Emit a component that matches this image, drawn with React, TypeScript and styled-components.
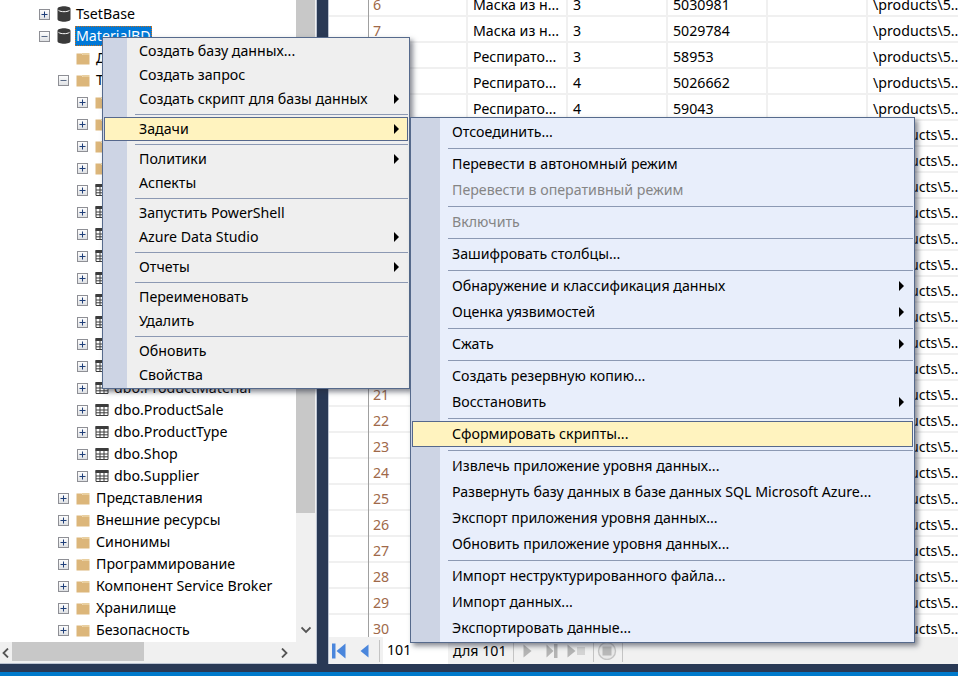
import React from "react";
import styled, { createGlobalStyle } from "styled-components";

const Global = createGlobalStyle`
  html, body { margin: 0; padding: 0; background: #fff; overflow: hidden; }
  * { box-sizing: border-box; }
`;

const Win = styled.div`
  position: relative;
  width: 958px;
  height: 676px;
  overflow: hidden;
  display: flex;
  flex-direction: column;
  background: #293955;
  font-family: "Noto Sans", "Open Sans", sans-serif;
  font-size: 14.2px;
  color: #000;
`;
const Workspace = styled.div`
  display: flex;
  height: 664px;
  flex: none;
`;
const TreePanel = styled.div`
  width: 317px;
  flex: none;
  display: flex;
  flex-direction: column;
  background: #fff;
  border-right: 1px solid #bcc4d2;
  border-bottom: 1px solid #bcc4d2;
`;
const TreeBody = styled.div`
  flex: 1;
  display: flex;
  min-height: 0;
`;
const TreeList = styled.div`
  flex: 1;
  padding-top: 3px;
  overflow: hidden;
`;
const Row = styled.div<{ $level: number }>`
  height: 22px;
  display: flex;
  align-items: center;
  padding-left: ${(p) => 39 + (p.$level - 1) * 19}px;
  white-space: nowrap;
`;
const Expander = styled.span<{ $hidden?: boolean }>`
  width: 11px;
  height: 11px;
  flex: none;
  margin-right: 7px;
  position: relative;
  visibility: ${(p) => (p.$hidden ? "hidden" : "visible")};
  border: 1px solid #8e8f95;
  background: linear-gradient(#fdfdfd, #dfe1e4);
`;
const ExpPlus = styled.svg`
  position: absolute;
  left: 0;
  top: 0;
  width: 9px;
  height: 9px;
  display: block;
`;
const NodeIcon = styled.svg<{ $gap: number }>`
  width: 14px;
  height: 16px;
  flex: none;
  margin-right: ${(p) => p.$gap}px;
  display: block;
`;
const Label = styled.span<{ $selected?: boolean }>`
  line-height: 20px;
  padding: 0 1px;
  margin-left: -1px;
  ${(p) =>
    p.$selected
      ? "background:#0078d7;color:#fff;outline:1px dotted #c8701c;outline-offset:-1px;"
      : ""}
`;
const VScroll = styled.div`
  width: 20px;
  flex: none;
  background: #f0f0f0;
  display: flex;
  flex-direction: column;
  align-items: center;
  padding-bottom: 7px;
`;
const VThumb = styled.div`
  width: 19px;
  margin-right: 1px;
  height: 513px;
  flex: none;
  background: #c8c8c8;
`;
const HScroll = styled.div`
  height: 21px;
  flex: none;
  background: #f0f0f0;
  display: flex;
  align-items: center;
  padding: 0 27px 0 1px;
`;
const HThumb = styled.div`
  width: 132px;
  height: 19px;
  margin-left: 1px;
  background: #c8c8c8;
  align-self: flex-start;
`;
const Chevron = styled.svg<{ $push?: boolean }>`
  width: 10px;
  height: 10px;
  flex: none;
  display: block;
  ${(p) => (p.$push ? "margin-left:auto;" : "")}
`;
const VChevron = styled(Chevron)`
  margin-top: auto;
`;
const Splitter = styled.div`
  width: 11px;
  flex: none;
  background: #293955;
`;
const GridPanel = styled.div`
  flex: 1;
  min-width: 0;
  display: flex;
  flex-direction: column;
  background: #fff;
  border-left: 1px solid #bcc4d2;
`;
const Rows = styled.div`
  flex: 1;
  min-height: 0;
  overflow: hidden;
`;
const RowsInner = styled.div`
  margin-top: -9px;
`;
const GridRow = styled.div`
  height: 26px;
  display: grid;
  grid-template-columns: 40px 99px 100px 100px 100px 100px 1fr;
  border-bottom: 2px solid #f0f0f0;
`;
const RowHeader = styled.div`
  border-right: 1px solid #a0a0a0;
  margin-bottom: -2px;
`;
const Cell = styled.div<{ $number?: boolean }>`
  border-right: 2px solid #f0f0f0;
  margin-bottom: -2px;
  padding: 2px 0 0 ${(p) => (p.$number ? 4 : 5)}px;
  line-height: 24px;
  white-space: nowrap;
  color: ${(p) => (p.$number ? "#a0694a" : "#000")};
`;
const Pager = styled.div`
  height: 27px;
  flex: none;
  background: #f1f1f1;
  display: flex;
  align-items: center;
  padding-left: 3px;
`;
const PagerIcon = styled.svg<{ $w: number; $ml: number }>`
  width: ${(p) => p.$w}px;
  height: 18px;
  margin-left: ${(p) => p.$ml}px;
  flex: none;
  display: block;
`;
const PagerSep = styled.span<{ $ml: number }>`
  width: 1px;
  height: 22px;
  background: #c4c4c4;
  flex: none;
  margin-left: ${(p) => p.$ml}px;
`;
const PagerInput = styled.div`
  width: 65px;
  height: 27px;
  margin-left: 3px;
  background: #fff;
  line-height: 25px;
  padding-left: 4px;
  flex: none;
`;
const PagerText = styled.span`
  margin-left: 5px;
  width: 59px;
  flex: none;
`;
const Footer = styled.div`
  flex: 1;
  display: flex;
  flex-direction: column;
  justify-content: flex-end;
  background: #293955;
`;
const StatusBar = styled.div`
  height: 4px;
  background: #007acc;
`;
const Menu = styled.div<{ $left: number; $top: number; $width: number; $bg: string; $gutter: number }>`
  position: absolute;
  left: ${(p) => p.$left}px;
  top: ${(p) => p.$top}px;
  width: ${(p) => p.$width}px;
  padding: 1px;
  border: 1px solid #566a8c;
  background: linear-gradient(
    to right,
    #cdd4e4 0,
    #cdd4e4 ${(p) => p.$gutter}px,
    ${(p) => p.$bg} ${(p) => p.$gutter}px
  );
  box-shadow: 3px 3px 5px rgba(40, 45, 60, 0.55);
`;
const MenuItem = styled.div<{ $h: number; $pad: number; $active?: boolean; $disabled?: boolean }>`
  height: ${(p) => p.$h}px;
  display: flex;
  align-items: center;
  justify-content: space-between;
  padding-left: ${(p) => p.$pad}px;
  padding-right: 9px;
  white-space: nowrap;
  color: ${(p) => (p.$disabled ? "#858585" : "#000")};
  ${(p) =>
    p.$active
      ? `background:#fff3bf;outline:1px solid #56688c;outline-offset:-1px;`
      : ""}
`;
const MenuLabel = styled.span`
  line-height: 20px;
`;
const MenuSep = styled.div<{ $inset: number }>`
  height: 6px;
  margin-left: ${(p) => p.$inset}px;
  display: flex;
  align-items: center;
  &::before {
    content: "";
    flex: 1;
    height: 1px;
    background: #8c99b3;
  }
`;
const Arrow = styled.span`
  width: 0;
  height: 0;
  border-left: 5px solid #000;
  border-top: 5px solid transparent;
  border-bottom: 5px solid transparent;
`;

type NodeKind = "db" | "folder" | "table";
type NodeDef = { level: number; kind: NodeKind; text: string; open?: boolean; leaf?: boolean; selected?: boolean };

const folders3 = ["Системные таблицы", "FileTables", "Внешние таблицы", "Графовые таблицы"];
const tables = ["dbo.Agent", "dbo.Material", "dbo.MaterialType", "dbo.Product", "dbo.ProductCost", "dbo.ProductImage", "dbo.ProductLog", "dbo.ProductPrice", "dbo.ProductStock", "dbo.ProductMaterial"];

const nodes: NodeDef[] = [
  { level: 1, kind: "db", text: "TsetBase" },
  { level: 1, kind: "db", text: "MaterialBD", open: true, selected: true },
  { level: 2, kind: "folder", text: "Диаграммы баз данных", leaf: true },
  { level: 2, kind: "folder", text: "Таблицы", open: true },
  ...folders3.map((text) => ({ level: 3, kind: "folder" as NodeKind, text })),
  ...tables.map((text) => ({ level: 3, kind: "table" as NodeKind, text })),
  { level: 3, kind: "table", text: "dbo.ProductSale" },
  { level: 3, kind: "table", text: "dbo.ProductType" },
  { level: 3, kind: "table", text: "dbo.Shop" },
  { level: 3, kind: "table", text: "dbo.Supplier" },
  { level: 2, kind: "folder", text: "Представления" },
  { level: 2, kind: "folder", text: "Внешние ресурсы" },
  { level: 2, kind: "folder", text: "Синонимы" },
  { level: 2, kind: "folder", text: "Программирование" },
  { level: 2, kind: "folder", text: "Компонент Service Broker" },
  { level: 2, kind: "folder", text: "Хранилище" },
  { level: 2, kind: "folder", text: "Безопасность" },
];

const TreeGlyph = ({ kind, level }: { kind: NodeKind; level: number }) => {
  const gap = level === 2 ? 6 : 5;
  if (kind === "db")
    return (
      <NodeIcon $gap={gap} viewBox="0 0 14 16">
        <path d="M0.5 3C0.5 1.2 3.5 0.3 7 0.3S13.5 1.2 13.5 3V13C13.5 14.8 10.5 15.7 7 15.7S0.5 14.8 0.5 13Z" fill="#3a3a3a" />
        <path d="M1.5 4.4C3 5.4 5 5.7 7 5.7S11 5.4 12.5 4.4" fill="none" stroke="#ffffff" strokeWidth="1" />
      </NodeIcon>
    );
  if (kind === "folder")
    return (
      <NodeIcon $gap={gap} viewBox="0 0 14 16">
        <path d="M0.5 3.5H5.5L7 5H13.5V14.5H0.5Z" fill="#dcb67a" />
        <path d="M5.5 3H13.5V5H7Z" fill="#e9cf9f" />
      </NodeIcon>
    );
  return (
    <NodeIcon $gap={gap} viewBox="0 0 14 16">
      <path d="M1 2.5H13V14H1Z" fill="#fff" />
      <path d="M0.5 2H13.5V5H0.5Z" fill="#3c3c3c" />
      <path d="M1 2.5H13V13.5H1ZM1 8H13M1 10.8H13M5 5V13.5M9 5V13.5" fill="none" stroke="#3c3c3c" strokeWidth="1" />
    </NodeIcon>
  );
};

const gridData: Record<number, string[]> = {
  6: ["Маска из н...", "3", "5030981"],
  7: ["Маска из н...", "3", "5029784"],
  8: ["Респирато...", "3", "58953"],
  9: ["Респирато...", "4", "5026662"],
  10: ["Респирато...", "4", "59043"],
};
const rowNums = Array.from({ length: 25 }, (_, i) => i + 6);

type MI = { t?: string; sub?: boolean; dis?: boolean; active?: boolean };
const S: MI = {};
const menu1: MI[] = [
  { t: "Создать базу данных..." },
  { t: "Создать запрос" },
  { t: "Создать скрипт для базы данных", sub: true },
  S,
  { t: "Задачи", sub: true, active: true },
  S,
  { t: "Политики", sub: true },
  { t: "Аспекты" },
  S,
  { t: "Запустить PowerShell" },
  { t: "Azure Data Studio", sub: true },
  S,
  { t: "Отчеты", sub: true },
  S,
  { t: "Переименовать" },
  { t: "Удалить" },
  S,
  { t: "Обновить" },
  { t: "Свойства" },
];
const menu2: MI[] = [
  { t: "Отсоединить..." },
  S,
  { t: "Перевести в автономный режим" },
  { t: "Перевести в оперативный режим", dis: true },
  S,
  { t: "Включить", dis: true },
  S,
  { t: "Зашифровать столбцы..." },
  S,
  { t: "Обнаружение и классификация данных", sub: true },
  { t: "Оценка уязвимостей", sub: true },
  S,
  { t: "Сжать", sub: true },
  S,
  { t: "Создать резервную копию..." },
  { t: "Восстановить", sub: true },
  S,
  { t: "Сформировать скрипты...", active: true },
  S,
  { t: "Извлечь приложение уровня данных..." },
  { t: "Развернуть базу данных в базе данных SQL Microsoft Azure..." },
  { t: "Экспорт приложения уровня данных..." },
  { t: "Обновить приложение уровня данных..." },
  S,
  { t: "Импорт неструктурированного файла..." },
  { t: "Импорт данных..." },
  { t: "Экспортировать данные..." },
];

const MenuList = ({ items, h, pad, inset }: { items: MI[]; h: number; pad: number; inset: number }) => (
  <>
    {items.map((m, i) =>
      m.t ? (
        <MenuItem key={i} $h={h} $pad={pad} $active={m.active} $disabled={m.dis}>
          <MenuLabel>{m.t}</MenuLabel>
          {m.sub && <Arrow />}
        </MenuItem>
      ) : (
        <MenuSep key={i} $inset={inset} />
      )
    )}
  </>
);

export default function App() {
  return (
    <Win>
      <Global />
      <Workspace>
        <TreePanel>
          <TreeBody>
            <TreeList>
              {nodes.map((n, i) => (
                <Row key={i} $level={n.level}>
                  <Expander $hidden={n.leaf}>
                    <ExpPlus viewBox="0 0 9 9">
                      <path d={n.open ? "M1.5 4.5H7.5" : "M1.5 4.5H7.5M4.5 1.5V7.5"} stroke={n.open ? "#5a6a86" : "#1f3f7a"} strokeWidth="1" fill="none" />
                    </ExpPlus>
                  </Expander>
                  <TreeGlyph kind={n.kind} level={n.level} />
                  <Label $selected={n.selected}>{n.text}</Label>
                </Row>
              ))}
            </TreeList>
            <VScroll>
              <VThumb />
              <VChevron viewBox="0 0 10 10">
                <path d="M0.5 2.5L5 7L9.5 2.5" fill="none" stroke="#555" strokeWidth="1.8" />
              </VChevron>
            </VScroll>
          </TreeBody>
          <HScroll>
            <Chevron viewBox="0 0 10 10">
              <path d="M7 0.5L2.5 5L7 9.5" fill="none" stroke="#555" strokeWidth="1.8" />
            </Chevron>
            <HThumb />
            <Chevron $push viewBox="0 0 10 10">
              <path d="M3 0.5L7.5 5L3 9.5" fill="none" stroke="#555" strokeWidth="1.8" />
            </Chevron>
          </HScroll>
        </TreePanel>
        <Splitter />
        <GridPanel>
          <Rows>
            <RowsInner>
              {rowNums.map((n) => {
                const d = gridData[n] || ["", "", ""];
                return (
                  <GridRow key={n}>
                    <RowHeader />
                    <Cell $number>{n}</Cell>
                    <Cell>{d[0]}</Cell>
                    <Cell>{d[1]}</Cell>
                    <Cell>{d[2]}</Cell>
                    <Cell />
                    <Cell>\products\5...</Cell>
                  </GridRow>
                );
              })}
            </RowsInner>
          </Rows>
          <Pager>
            <PagerIcon $w={14} $ml={0} viewBox="0 0 14 18">
              <path d="M0 1.5H3.5V16.5H0Z" fill="#4a86dc" />
              <path d="M13.5 1.5V16.5L4.5 9Z" fill="#4a86dc" />
            </PagerIcon>
            <PagerIcon $w={9} $ml={14} viewBox="0 0 9 18">
              <path d="M8.5 2.5V15.5L0.5 9Z" fill="#4a86dc" />
            </PagerIcon>
            <PagerSep $ml={10} />
            <PagerInput>101</PagerInput>
            <PagerText>для 101</PagerText>
            <PagerSep $ml={1} />
            <PagerIcon $w={9} $ml={9} viewBox="0 0 9 18">
              <path d="M0.5 2.5V15.5L8.5 9Z" fill="#b4b4b4" />
            </PagerIcon>
            <PagerIcon $w={12} $ml={14} viewBox="0 0 12 18">
              <path d="M0.5 2.5V15.5L7.5 9Z" fill="#b4b4b4" />
              <path d="M8 2H11.5V16H8Z" fill="#b4b4b4" />
            </PagerIcon>
            <PagerIcon $w={19} $ml={9} viewBox="0 0 19 18">
              <path d="M0.5 2.5V15.5L8.5 9Z" fill="#b4b4b4" />
              <path d="M10 5H18V13H10Z" fill="#d4d4d4" />
            </PagerIcon>
            <PagerSep $ml={7} />
            <PagerIcon $w={20} $ml={3} viewBox="0 0 20 18">
              <circle cx="10" cy="9" r="8.5" fill="#e8e8e8" stroke="#c4c4c4" strokeWidth="1.4" />
              <path d="M5.5 4.5H14.5V13.5H5.5Z" fill="#b8b8b8" />
            </PagerIcon>
            <PagerSep $ml={5} />
          </Pager>
        </GridPanel>
      </Workspace>
      <Footer>
        <StatusBar />
      </Footer>
      <Menu $left={102} $top={37} $width={308} $bg="#efefef" $gutter={24}>
        <MenuList items={menu1} h={24} pad={35} inset={31} />
      </Menu>
      <Menu $left={410} $top={117} $width={505} $bg="#e8eefb" $gutter={29}>
        <MenuList items={menu2} h={26} pad={40} inset={36} />
      </Menu>
    </Win>
  );
}
